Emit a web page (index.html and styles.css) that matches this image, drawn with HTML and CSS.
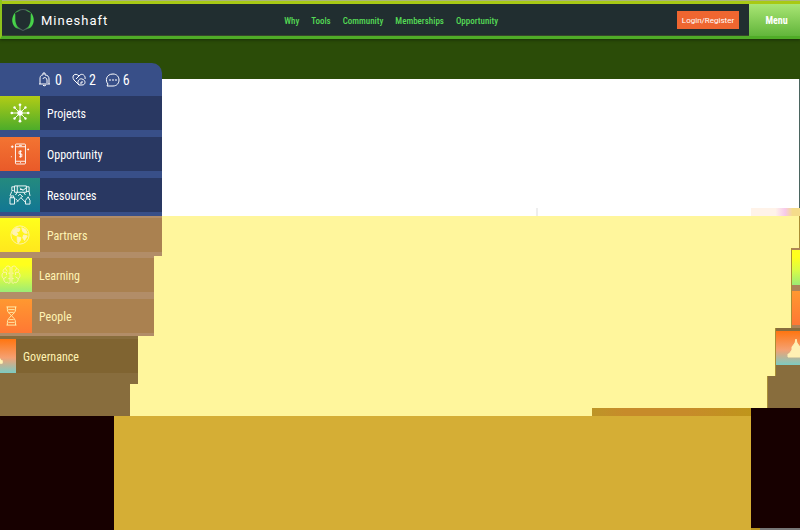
FILE: index.html
```html
<!DOCTYPE html>
<html lang="en">
<head>
<meta charset="utf-8">
<title>Mineshaft</title>
<link rel="stylesheet" href="styles.css">
</head>
<body>
<header class="topbar">
  <a class="brand" href="#">
    <svg class="logo" viewBox="0 0 24 24" aria-hidden="true">
      <defs><linearGradient id="shield"><stop offset="0" stop-color="#4be04b"/><stop offset=".2" stop-color="#43c447"/><stop offset=".4" stop-color="#4c5c5c"/><stop offset=".6" stop-color="#4c5c5c"/><stop offset=".8" stop-color="#43c447"/><stop offset="1" stop-color="#4be04b"/></linearGradient></defs>
      <path d="M12 1C8 1 5 3 3 6C0 11 1 17 5 20C8 21 10 22 12 23C14 22 16 21 19 20C23 17 24 11 21 6C19 3 16 1 12 1ZM12 2C15 2 17 4 20 5C19 9 21 14 17 19L12 22L7 19C3 14 5 9 4 5C7 4 9 2 12 2Z" fill="url(#shield)" fill-rule="evenodd"/>
    </svg>
    <span>Mineshaft</span>
  </a>
  <nav class="links">
    <a href="#">Why</a><a href="#">Tools</a><a href="#">Community</a><a href="#">Memberships</a><a href="#">Opportunity</a>
  </nav>
  <button class="login" type="button">Login/Register</button>
  <button class="menu" type="button">Menu</button>
</header>
<main class="stage">
  <aside class="side">
    <div class="panel first">
      <div class="stats">
        <span class="stat"><svg class="stat-icon" viewBox="0 0 14 14"><path d="M1 11H12M2 11V6C2 2 4 2 5 2V0H7V2C10 2 11 4 11 6V11M5 12L6 13L8 12M5 6C5 4 9 4 9 7V10"/></svg>0</span>
        <span class="stat"><svg class="stat-icon" viewBox="0 0 14 14"><path d="M7 12L2 7C-1 3 3-1 7 3C10-1 14 3 13 6M7 12C4 8 8 5 10 6C14 7 14 12 10 12H7M10 8V10H8M4 6L7 3"/></svg>2</span>
        <span class="stat"><svg class="stat-icon" viewBox="0 0 14 14"><path d="M2 11L1 13H7C15 13 15 1 7 1C0 1-1 8 2 11"/><path d="M3 7H5M6 7H8M9 7H11"/></svg>6</span>
      </div>
      <a class="item" href="#"><span class="tile green"><svg viewBox="0 0 22 22"><path d="M11 11V3M11 11V19M11 11H2M11 11H20M11 11L5 5M11 11L17 5M11 11L5 17M11 11L17 17"/><g fill="currentColor" stroke="none"><circle cx="11" cy="11" r="3"/><circle cx="11" cy="2" r="1.5"/><circle cx="11" cy="20" r="1.5"/><circle cx="2" cy="11" r="1.5"/><circle cx="20" cy="11" r="1.5"/><circle cx="5" cy="5" r="1.3"/><circle cx="17" cy="5" r="1.3"/><circle cx="5" cy="17" r="1.3"/><circle cx="17" cy="17" r="1.3"/></g></svg></span>Projects</a>
      <a class="item" href="#"><span class="tile orange"><svg viewBox="0 0 22 22"><rect x="6" y="0" width="11" height="22" rx="1"/><path d="M6 3H17M6 19H17M10 1.500H13M11 20.500H12M13 8H10V11H13V14H10M11.500 7V15M1 3H4M2.500 1.500V4.500M19 6H21M20 5V7M1 14H2"/></svg></span>Opportunity</a>
      <a class="item" href="#"><span class="tile teal"><svg viewBox="0 0 22 22"><path d="M5 1H18V8H5ZM8 1V8M11 3L14 6L18 3M11 5H14M5 2H2V6H4M18 2H21V7H18M2 7L0 12M21 7L22 12M0 14H5V21H0ZM1 14V12H4V14M17 21H22V17L20 13L17 17ZM7 19L14 12M9 12L11 10L14 13M12 14L17 19M6 15L9 18M8 8L6 11M15 8L17 11"/></svg></span>Resources</a>
    </div>
    <div class="panel tan">
      <a class="item" href="#"><span class="tile yellow"><svg viewBox="0 0 22 22"><circle cx="11" cy="11" r="10"/><path fill="currentColor" d="M3 6L7 3L11 4L10 7L7 8L9 10L7 12L3 10ZM8 13L12 14L11 18L9 20L8 17ZM13 3L17 5L19 9L16 9L14 7ZM15 11L19 12L16 17L14 14Z"/></svg></span>Partners</a>
    </div>
    <div class="panel tan medium">
      <a class="item" href="#"><span class="tile lime"><svg viewBox="0 0 22 22"><path d="M10 2C7 0 5 2 5 4C2 4 2 7 3 8C0 10 1 14 3 15C3 19 6 20 7 19C9 21 10 20 10 18ZM12 2C15 0 17 2 17 4C20 4 20 7 19 8C22 10 21 14 19 15C19 19 16 20 15 19C13 21 12 20 12 18ZM5 4L7 7M3 8H6V11M3 15L6 13M10 9H8M10 15H8M17 4L15 7M19 8H16V11M19 15L16 13M12 9H14M12 15H14"/></svg></span>Learning</a>
      <a class="item" href="#"><span class="tile amber"><svg viewBox="0 0 22 22"><path d="M6 1H17M7 1V4C7 9 16 12 16 18V21M16 1V4C16 9 7 12 7 18V21M6 21H17M8 4H15M9 7H14M9 15H14M8 18H15"/></svg></span>People</a>
    </div>
    <div class="panel olive narrow">
      <a class="item" href="#"><span class="tile sunset"><svg viewBox="0 0 22 22"><path fill="currentColor" d="M11 1L12 5L15 9V12L18 16H19V19H3V16H4L7 12V9L10 5Z"/></svg></span>Governance</a>
    </div>
    <div class="step"></div>
    <div class="dark"></div>
  </aside>
  <section class="content"><div class="mark"></div><div class="seam"></div></section>
  <aside class="edge">
    <div class="rim"></div>
    <div class="noise"></div>
    <div class="slice line"></div>
    <div class="slice pair"><div class="chip lime"></div><div class="chip amber"></div></div>
    <div class="slice dome"><div class="chip sunset"><svg viewBox="0 0 22 22"><path fill="currentColor" d="M11 1L12 5L15 9V12L18 16H19V19H3V16H4L7 12V9L10 5Z"/></svg></div></div>
    <div class="slice foot"></div>
    <div class="dark"></div>
    <div class="corner"></div>
  </aside>
</main>
</body>
</html>
```
FILE: styles.css
```css
* { box-sizing: border-box; }
body {
  margin: 0;
  min-height: 100vh;
  display: flex;
  flex-direction: column;
  font-family: "Roboto Condensed", Roboto, sans-serif;
  background: #d5ae35;
}
a { color: inherit; text-decoration: none; }
button { border: 0; padding: 0; color: #fff; }
svg { display: block; fill: none; stroke: currentColor; stroke-width: 1; overflow: visible; }

.topbar {
  display: grid;
  grid-template-columns: 9fr auto 8fr auto;
  align-items: center;
  background: linear-gradient(#abb57c 0 1px, #a8c914 1px 4px, #212e30 4px);
  padding-top: 4px;
  border-bottom: 3px solid #4fac27;
  border-left: 2px solid #8fc21c;
  box-shadow: inset 0 -1px #36472b, 0 1px 3px #182d08;
  height: 39px;
  position: relative;
}
.brand { display: flex; align-items: center; gap: 6px; padding-left: 9px; font: 13px Roboto, sans-serif; letter-spacing: 1px; color: #fff; }
.logo { width: 24px; height: 24px; stroke: none; }
.links { display: flex; gap: 12px; padding-top: 2px; font-size: 9px; font-weight: 500; color: #55da55; }
.login { justify-self: end; margin-right: 10px; width: 62px; height: 18px; background: #ef6630; font: 8px Roboto, sans-serif; }
.menu { align-self: stretch; width: 51px; padding-left: 4px; background: linear-gradient(#a9e574, #62b53b); font: 700 10px "Roboto Condensed", sans-serif; }

.stage {
  flex: 1;
  display: grid;
  grid-template-columns: 162px 1fr 49px;
  background: linear-gradient(#2b4c08 0 40px, #fff 40px 177px, #fff69c 177px 377px, #d5ae35 377px);
}
.side { display: flex; flex-direction: column; align-items: flex-start; padding-top: 24px; }
.panel { width: 100%; display: flex; flex-direction: column; gap: 7px; padding: 2px 0 4px; color: #fff3b3; }
.first { padding-top: 0; background: #384f88; border-top-right-radius: 10px; color: #fff; }
.stats { height: 33px; margin-bottom: -7px; padding-left: 38px; display: flex; align-items: center; gap: 10px; font-size: 14px; }
.stat { display: flex; align-items: center; gap: 3px; }
.stat-icon { width: 14px; height: 14px; }
.item { display: flex; align-items: center; gap: 7px; height: 34px; padding-top: 2px; background: #293862; font-size: 12px; overflow: hidden; }
.tile { flex: none; width: 40px; height: 34px; margin-top: -2px; display: flex; align-items: center; justify-content: center; }
.tile svg { width: 20px; height: 20px; }
.tan { background: #b28d68; }
.tan .item { background: #aa8150; }
.medium { width: 154px; padding-bottom: 3px; }
.narrow { width: 138px; padding: 3px 0 11px; }
.medium .tile { width: 32px; justify-content: flex-end; padding-right: 11px; }
.olive { background: #886d3d; }
.olive .item { background: #806431; }
.narrow .tile { width: 16px; justify-content: flex-end; padding-right: 11px; }
.step { width: 130px; height: 32px; background: #886d3d; }
.dark { flex: 1; background: #170000; }
.side .dark { width: 114px; }

.green { background: linear-gradient(#b2cc16, #4cac2a); }
.orange { background: linear-gradient(#f37432, #e95a29); }
.teal { background: linear-gradient(#248a7e, #127794); }
.yellow { background: linear-gradient(#ffff1c, #ffe71d); }
.lime { background: linear-gradient(#ffff1d 20%, #ddfc43 55%, #9cec75); }
.amber { background: linear-gradient(#ff9830, #ff7834); }
.sunset { background: linear-gradient(#ff7510, #f5a071 55%, #7ccbc2); }

.content { display: flex; flex-direction: column; align-items: flex-end; padding-top: 169px; }
.mark { width: 215px; height: 8px; margin-bottom: 192px; background: linear-gradient(90deg, #eee 0 2px, #fff 2px); }
.seam { width: 159px; height: 8px; background: linear-gradient(90deg, #bd9527, #c78b2a 20% 60%, #bf951b); }

.edge { display: flex; flex-direction: column; align-items: flex-end; padding-top: 40px; color: #fff0b3; }
.rim { width: 1px; height: 129px; background: #4b6560; }
.noise { width: 100%; height: 8px; background: linear-gradient(90deg, #fff3e9 50%, #f7c9ea 70%, #f5dc8a 85%); }
.slice { background: #886d3d; border-left: 1px solid #a98e35; }
.line { width: 1px; height: 32px; }
.pair { width: 9px; height: 80px; display: flex; flex-direction: column; gap: 6px; padding: 2px 0 3px; background: #ae8357; }
.chip { height: 36px; }
.dome { width: 25px; height: 48px; padding-top: 3px; }
.dome .chip { height: 34px; padding: 7px 0 0 9px; overflow: hidden; }
.dome svg { width: 22px; height: 22px; }
.foot { width: 33px; height: 32px; }
.edge .dark { width: 100%; }
.corner { width: 100%; height: 2px; background: linear-gradient(90deg, #b8941f 0 9px, #777 9px); }
```
